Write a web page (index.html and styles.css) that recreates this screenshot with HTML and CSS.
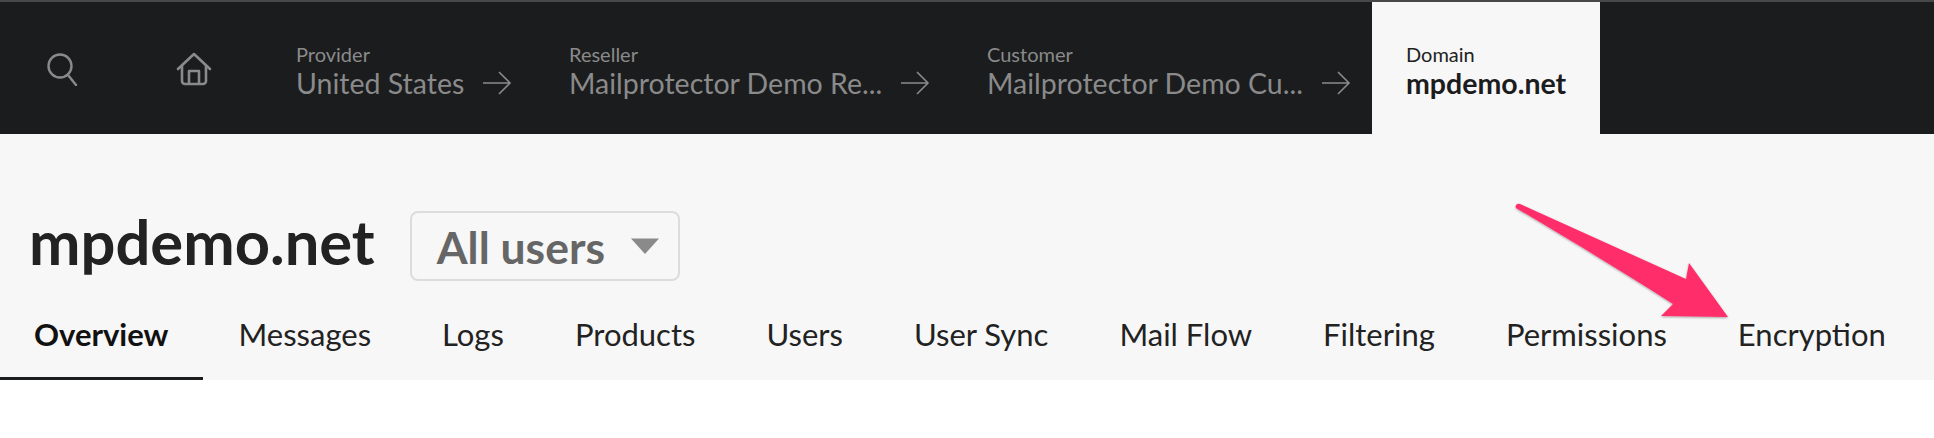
FILE: index.html
```html
<!DOCTYPE html>
<html lang="en">
<head>
<meta charset="utf-8">
<title>mpdemo.net</title>
<link rel="stylesheet" href="styles.css">
</head>
<body>
<header class="topbar">
  <div class="icon-cell search-cell">
    <svg width="34" height="34" viewBox="0 0 34 34" fill="none" stroke="#8a8a8a" stroke-width="2.4" stroke-linecap="round"><circle cx="14" cy="14" r="11.500"/><path d="M22 23l8 10"/></svg>
  </div>
  <div class="icon-cell home-cell">
    <svg width="36" height="34" viewBox="0 0 36 34" fill="none" stroke="#8a8a8a" stroke-width="2.6" stroke-linecap="round" stroke-linejoin="round"><path d="M2 17L18 2l16 15"/><path d="M6 14v15a3 3 0 0 0 3 3h18a3 3 0 0 0 3-3V14"/><path d="M13 31V19h10v12"/></svg>
  </div>
  <div class="crumb crumb-provider"><span class="crumb-label">Provider</span><span class="crumb-value">United States</span><svg class="crumb-arrow" width="30" height="24" viewBox="0 0 30 24" fill="none" stroke="#8a8a8a" stroke-width="1.6"><path d="M1 12h27M17 1l11 11-11 11"/></svg></div>
  <div class="crumb crumb-reseller"><span class="crumb-label">Reseller</span><span class="crumb-value">Mailprotector Demo Re...</span><svg class="crumb-arrow" width="30" height="24" viewBox="0 0 30 24" fill="none" stroke="#8a8a8a" stroke-width="1.6"><path d="M1 12h27M17 1l11 11-11 11"/></svg></div>
  <div class="crumb crumb-customer"><span class="crumb-label">Customer</span><span class="crumb-value">Mailprotector Demo Cu...</span><svg class="crumb-arrow" width="30" height="24" viewBox="0 0 30 24" fill="none" stroke="#8a8a8a" stroke-width="1.6"><path d="M1 12h27M17 1l11 11-11 11"/></svg></div>
  <div class="crumb-active"><span class="crumb-label">Domain</span><span class="crumb-value">mpdemo.net</span></div>
</header>
<main class="panel">
  <div class="title-row">
    <h1 class="title">mpdemo.net</h1>
    <div class="select"><span>All users</span><svg width="30" height="18" viewBox="0 0 30 18"><path d="M1 1.500h28L15 17z" fill="#8a8a8a"/></svg></div>
  </div>
  <nav class="tabs">
    <a class="tab tab-active">Overview</a>
    <a class="tab">Messages</a>
    <a class="tab">Logs</a>
    <a class="tab">Products</a>
    <a class="tab">Users</a>
    <a class="tab">User Sync</a>
    <a class="tab">Mail Flow</a>
    <a class="tab">Filtering</a>
    <a class="tab">Permissions</a>
    <a class="tab">Encryption</a>
  </nav>
</main>
<svg class="callout" width="1934" height="438" viewBox="0 0 1934 438"><defs><filter id="s" x="-10%" y="-10%" width="120%" height="120%"><feDropShadow dx="0" dy="1" stdDeviation="1" flood-color="#000" flood-opacity=".35"/></filter></defs><path d="M1516 208a3 3 0 0 1 4-4L1686 279l3-16 39 54-67-1 12-12C1620 270 1570 240 1516 208z" fill="#ff2d6b" filter="url(#s)"/></svg>
</body>
</html>
```
FILE: styles.css
```css
* { box-sizing: border-box; }
html, body { margin: 0; padding: 0; background: #fff; }
body { width: 1934px; height: 438px; overflow: hidden; font-family: Lato, "Liberation Sans", sans-serif; position: relative; }

.topbar { height: 134px; background: #1b1c1e; border-top: 2px solid #47484a; display: flex; align-items: stretch; }
.icon-cell { display: flex; align-items: center; }
.search-cell { width: 176px; padding: 2px 0 0 46px; }
.home-cell { width: 120px; padding: 2px 0 0 0; }
.crumb { display: grid; grid-template-columns: auto auto; justify-content: start; align-content: center; column-gap: 18px; padding-top: 8px; }
.crumb-provider { width: 273px; }
.crumb-reseller { width: 418px; }
.crumb-customer { width: 385px; }
.crumb-label { grid-column: 1 / -1; font-size: 20px; line-height: 22px; color: #8a8a8a; }
.crumb-value { font-size: 28.500px; line-height: 36px; color: #8a8a8a; white-space: nowrap; }
.crumb-arrow { align-self: center; }
.crumb-active { width: 228px; background: #f7f7f7; display: flex; flex-direction: column; justify-content: center; padding: 8px 0 0 34px; }
.crumb-active .crumb-label { color: #222; }
.crumb-active .crumb-value { color: #1b1c1e; font-weight: 700; }

.panel { height: 246px; background: #f7f7f7; display: flex; flex-direction: column; }
.title-row { display: flex; align-items: center; padding: 76px 0 0 29px; height: 148px; gap: 35px; }
.title { margin: 0 0 10px; font-size: 61.500px; font-weight: 700; line-height: 70px; color: #222; }
.select { width: 270px; height: 70px; border: 2px solid #dcdcdc; border-radius: 8px; display: flex; align-items: center; justify-content: space-between; padding: 0 18px 0 25px; font-size: 44.500px; font-weight: 700; color: #666; }
.tabs { flex: 1; display: flex; align-items: stretch; }
.tab { font-size: 31px; color: #222; padding: 33px 35.500px 0; white-space: nowrap; }
.tab-active { font-weight: 700; color: #111; border-bottom: 3px solid #1b1c1e; padding-left: 34px; padding-right: 34.500px; }

.callout { position: absolute; left: 0; top: 0; pointer-events: none; }
```
